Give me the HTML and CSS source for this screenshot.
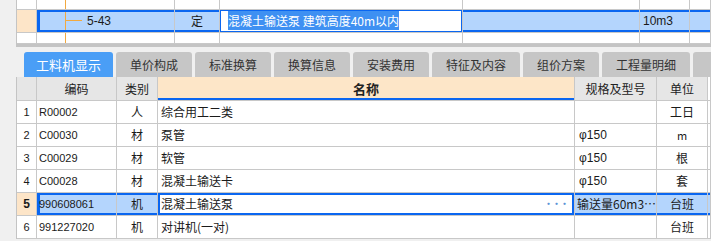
FILE: index.html
```html
<!DOCTYPE html>
<html lang="zh-CN">
<head>
    <meta charset="UTF-8">
    <title>工料机显示</title>
    <link rel="stylesheet" href="styles.css">
</head>
<body>
    <div class="page">
        <table class="top">
            <colgroup>
                <col class="c-no"><col class="t-code"><col class="t-type"><col class="t-name"><col class="t-blank"><col class="t-unit"><col class="t-end">
            </colgroup>
            <tr class="stub">
                <td></td><td class="tree"></td><td></td><td></td><td></td><td></td><td></td>
            </tr>
            <tr class="cur">
                <td class="no"></td>
                <td class="tree branch mid first">5-43</td>
                <td class="mid center">定</td>
                <td class="edit"><span class="sel">混凝土输送泵 建筑高度40m以内</span></td>
                <td class="mid"></td>
                <td class="mid unit">10m3</td>
                <td class="mid"></td>
            </tr>
            <tr class="stub low">
                <td></td><td class="tree"></td><td></td><td></td><td></td><td></td><td></td>
            </tr>
        </table>
        <div class="split"></div>

        <div class="tabs">
            <div class="tab active">工料机显示</div>
            <div class="tab">单价构成</div>
            <div class="tab">标准换算</div>
            <div class="tab">换算信息</div>
            <div class="tab">安装费用</div>
            <div class="tab">特征及内容</div>
            <div class="tab">组价方案</div>
            <div class="tab">工程量明细</div>
            <div class="tab rest"></div>
        </div>

        <table class="grid">
            <colgroup>
                <col class="c-no"><col class="g-code"><col class="g-type"><col class="g-name"><col class="g-spec"><col class="g-unit"><col class="g-end">
            </colgroup>
            <tr class="head">
                <th></th>
                <th>编码</th>
                <th>类别</th>
                <th class="main">名称</th>
                <th>规格及型号</th>
                <th>单位</th>
                <th class="blank"></th>
            </tr>
            <tr>
                <td class="no">1</td><td class="code">R00002</td><td class="center">人</td><td class="name">综合用工二类</td><td class="spec"></td><td class="center">工日</td><td></td>
            </tr>
            <tr>
                <td class="no">2</td><td class="code">C00030</td><td class="center">材</td><td class="name">泵管</td><td class="spec">φ150</td><td class="center small">m</td><td></td>
            </tr>
            <tr>
                <td class="no">3</td><td class="code">C00029</td><td class="center">材</td><td class="name">软管</td><td class="spec">φ150</td><td class="center">根</td><td></td>
            </tr>
            <tr>
                <td class="no">4</td><td class="code">C00028</td><td class="center">材</td><td class="name">混凝土输送卡</td><td class="spec">φ150</td><td class="center">套</td><td></td>
            </tr>
            <tr class="cur">
                <td class="no mark">5</td>
                <td class="code mid first">990608061</td>
                <td class="center mid">机</td>
                <td class="name edit">混凝土输送泵<span class="more">···</span></td>
                <td class="spec mid">输送量60m3…</td>
                <td class="center mid">台班</td>
                <td class="mid"></td>
            </tr>
            <tr>
                <td class="no">6</td><td class="code">991227020</td><td class="center">机</td><td class="name">对讲机(一对)</td><td class="spec"></td><td class="center">台班</td><td></td>
            </tr>
        </table>
    </div>
</body>
</html>
```

FILE: styles.css
```css
body {
    margin: 0;
    background: #f0f0f0;
    font-family: "Noto Sans CJK SC", "Liberation Sans", sans-serif;
    font-size: 12px;
    color: #1a1a1a;
}
.page {
    width: 711px;
    height: 241px;
    overflow: hidden;
}
table {
    border-collapse: separate;
    border-spacing: 0;
    table-layout: fixed;
    margin-left: 16px;
    width: 695px;
    border-left: 1px solid #c4c4c4;
    background: #fff;
}
td, th {
    border-right: 1px solid #c8c8c8;
    border-bottom: 1px solid #c8c8c8;
    padding: 0;
    white-space: nowrap;
    overflow: hidden;
    line-height: 14px;
}
.c-no { width: 20px; }
.t-code { width: 138px; }
.t-type { width: 45px; }
.t-name { width: 243px; }
.t-blank { width: 177px; }
.t-unit { width: 50px; }
.t-end { width: 21px; }
.g-code { width: 80px; }
.g-type { width: 41px; }
.g-name { width: 417px; }
.g-spec { width: 82px; }
.g-unit { width: 51px; }
.g-end { width: 3px; }

/* upper grid */
.top tr.stub { height: 10px; }
.top tr.low { height: 11px; }
.top tr.cur { height: 23px; }
.top .tree {
    position: relative;
    background-image: linear-gradient(to right, transparent 28px, #f2a93f 28px, #f2a93f 29px, transparent 29px);
}
.top .branch::after {
    content: "";
    position: absolute;
    left: 29px;
    top: 10px;
    width: 16px;
    height: 1px;
    background: #f2a93f;
}
.top .branch {
    padding-left: 50px;
    font-family: "Liberation Sans", sans-serif;
    font-size: 12px;
}
.no {
    text-align: center;
    font-family: "Liberation Sans", sans-serif;
    font-size: 11px;
}
.cur .no, .no.mark {
    background: #fde5c8;
}
.no.mark { font-weight: bold; font-size: 12px; }
.cur .mid {
    background-color: #b4d5fd;
    box-shadow: inset 0 2px 0 #0a66f0, inset 0 -2px 0 #0a66f0;
}
.cur .first {
    box-shadow: inset 3px 0 0 #0a66f0, inset 0 2px 0 #0a66f0, inset 0 -2px 0 #0a66f0;
}
.top .edit {
    box-shadow: inset 0 0 0 1px #0a66f0;
    padding-left: 8px;
}
.sel {
    background: #3e90f2;
    color: #fff;
    padding: 1px 0;
}
.unit {
    padding-left: 3px;
    font-family: "Liberation Sans", sans-serif;
}
.center { text-align: center; }
.split {
    margin-left: 16px;
    height: 3px;
    background: #c4c4c4;
}

/* tabs */
.tabs {
    display: flex;
    gap: 3px;
    padding: 5px 0 0 24px;
    overflow: hidden;
}
.tab {
    flex: none;
    height: 25px;
    line-height: 25px;
    padding: 0 14px;
    font-size: 12px;
    background: #c6c6c6;
    color: #333;
    border-radius: 3px 3px 0 0;
}
.tab.active {
    background: #4a9ef6;
    color: #fff;
    padding: 0 12px;
    font-size: 13px;
}
.tab.rest { width: 40px; padding: 0; }

/* lower grid */
.grid tr { height: 23px; }
.grid tr.head { height: 24px; }
.grid th {
    background: #e6e6e6;
    font-weight: normal;
    font-size: 12px;
    color: #222;
}
.grid th.main {
    background: #fde6c8;
    font-weight: bold;
    font-size: 13px;
    box-shadow: inset 0 -2px 0 #0a66f0;
}
.grid th.blank { background: #fff; }
.code {
    padding-left: 2px;
    font-family: "Liberation Sans", sans-serif;
    font-size: 11px;
}
.name {
    padding-left: 3px;
    font-size: 12px;
}
.spec {
    padding-left: 4px;
    font-family: "Liberation Sans", sans-serif;
}
.spec:empty { padding: 0; }
.cur .spec { font-family: "Noto Sans CJK SC", sans-serif; padding-left: 2px; }
.small { font-size: 11px; }
.grid .edit {
    position: relative;
    box-shadow: inset 0 0 0 2px #0a66f0;
}
.more {
    position: absolute;
    right: 6px;
    top: 4px;
    color: #5a93d6;
    font-size: 9px;
    font-weight: bold;
    letter-spacing: -1px;
}
```
